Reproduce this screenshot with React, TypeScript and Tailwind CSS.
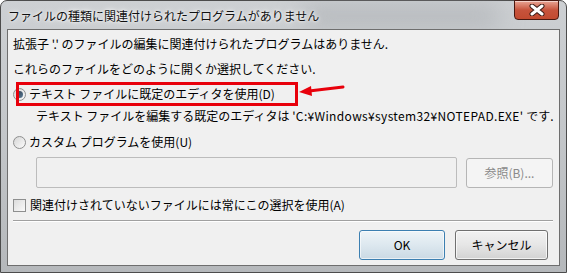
import React from "react";

const font = { fontFamily: '"Noto Sans CJK JP", "Noto Sans", sans-serif' };

function Radio({ checked }: { checked?: boolean }) {
  return (
    <span className="relative w-[13px] h-[13px] rounded-full border border-[#8e8f8f] bg-gradient-to-br from-[#d6d6d6] to-[#fbfbfb] flex items-center justify-center shrink-0">
      {checked && <span className="w-[7px] h-[7px] rounded-full bg-gradient-to-br from-[#2c3a4a] to-[#5d7d98]" />}
    </span>
  );
}

export default function App() {
  return (
    <div className="w-[567px] h-[273px] bg-white text-black text-[12px] leading-4 overflow-hidden" style={font}>
      {/* Aero frame */}
      <div className="relative w-full h-full rounded-t-[7px] border border-[#4c4c4c] bg-gradient-to-b from-[#cdd0d3] via-[#c3c6c9] to-[#b5b8bb] pt-[28px] px-[6px] pb-[6px] flex flex-col">
        {/* blurred background patches */}
        <div className="absolute top-[4px] left-[300px] w-[200px] h-[22px] bg-[#9ea2a6]/50 rounded-full blur-md pointer-events-none" />

        {/* title */}
        <div className="absolute left-[7px] top-[7px] text-[12px] leading-4 text-[#111] [text-shadow:0_0_6px_#fff,0_0_3px_#fff]">
          ファイルの種類に関連付けられたプログラムがありません
        </div>

        {/* close button */}
        <div className="absolute top-[-1px] right-[7px] w-[45px] h-[20px] rounded-b-[4px] border border-[#4a1810] bg-gradient-to-b from-[#e8a595] via-[#c7533c] to-[#c24a30] shadow-[inset_0_1px_0_rgba(255,255,255,0.5)] flex items-center justify-center">
          <svg width="16" height="12" viewBox="0 0 16 12">
            <path d="M3 2 L13 10 M13 2 L3 10" stroke="#3a1a14" strokeWidth="5" strokeLinecap="round" />
            <path d="M3 2 L13 10 M13 2 L3 10" stroke="#ffffff" strokeWidth="3" strokeLinecap="round" />
          </svg>
        </div>

        {/* client area */}
        <div className="relative flex-1 border border-[#6e6e6e] bg-[#f0f0f0] pl-[5px] pr-[6px] pt-[6px] flex flex-col">
          <p className="whitespace-nowrap">拡張子 '.' のファイルの編集に関連付けられたプログラムはありません.</p>
          <p className="mt-[9px] whitespace-nowrap">これらのファイルをどのように開くか選択してください.</p>

          <div className="mt-[9px] flex items-center gap-[3px] h-4">
            <Radio checked />
            <span className="whitespace-nowrap">テキスト ファイルに既定のエディタを使用(D)</span>
          </div>

          <p className="mt-[6px] ml-[23px] whitespace-nowrap">
            テキスト ファイルを編集する既定のエディタは <span className="tracking-[0.35px]">'C:¥Windows¥system32¥NOTEPAD.EXE'</span> です.
          </p>

          <div className="mt-[10px] flex items-center gap-[3px] h-4">
            <Radio />
            <span className="whitespace-nowrap">カスタム プログラムを使用(U)</span>
          </div>

          <div className="mt-[7px] ml-[23px] flex gap-[9px]">
            <div className="w-[425px] h-[31px] rounded-[2px] border border-[#bcbcbc] bg-[#f0f0f0]" />
            <button className="w-[88px] h-[30px] rounded-[3px] border border-[#b5b5b5] bg-[#f4f4f4] text-[#8a8a8a] text-[12px] mt-[1px]">
              参照(B)...
            </button>
          </div>

          <div className="mt-[9px] flex items-center gap-[4px] h-4">
            <span className="w-[13px] h-[13px] border border-[#8e8f8f] bg-gradient-to-br from-[#dcdcdc] to-[#fafafa] shrink-0" />
            <span className="whitespace-nowrap">関連付けされていないファイルには常にこの選択を使用(A)</span>
          </div>

          <div className="mt-[7px] border-t border-[#a0a0a0] border-b border-b-white" />

          <div className="mt-[8px] flex justify-end gap-[10px] pr-[5px]">
            <button className="w-[86px] h-[30px] rounded-[3px] border border-[#3c7fb1] bg-gradient-to-b from-[#eef4f8] via-[#dde8ef] to-[#cad9e4] shadow-[inset_0_0_0_1px_rgba(255,255,255,0.6)] text-[12px]">
              OK
            </button>
            <button className="w-[93px] h-[30px] rounded-[3px] border border-[#707070] bg-gradient-to-b from-[#f2f2f2] via-[#e6e6e6] to-[#d2d2d2] shadow-[inset_0_0_0_1px_rgba(255,255,255,0.7)] text-[12px]">
              キャンセル
            </button>
          </div>

          {/* red annotation box */}
          <div className="absolute left-[8px] top-[52px] w-[282px] h-[24px] border-[3px] border-[#e8000b] pointer-events-none" />
        </div>

        {/* red arrow */}
        <svg className="absolute left-[296px] top-[80px]" width="52" height="16" viewBox="0 0 52 16">
          <path d="M46 6 L12 10" stroke="#e8000b" strokeWidth="3" strokeLinecap="round" />
          <path d="M2 11 L14 5 L15 15 Z" fill="#e8000b" />
        </svg>
      </div>
    </div>
  );
}
